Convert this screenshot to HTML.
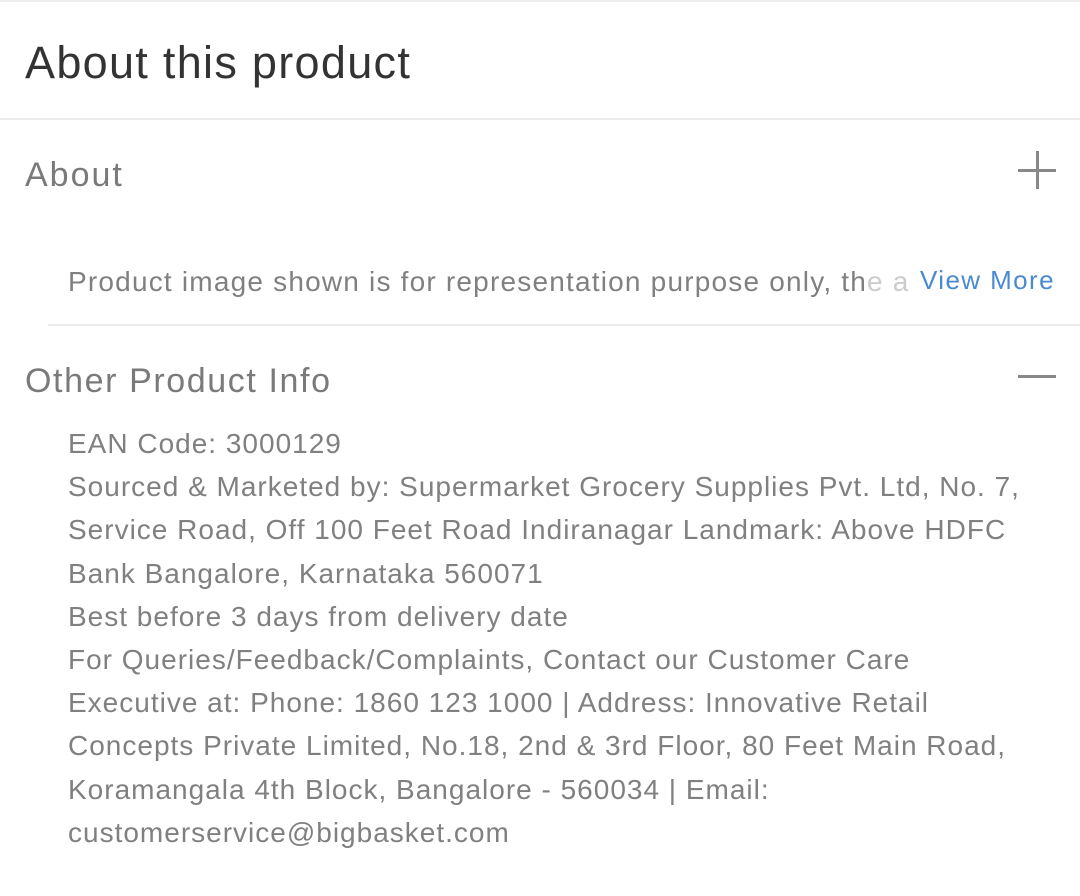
<!DOCTYPE html>
<html><head><meta charset="utf-8"><style>
body{margin:0;width:1080px;height:896px;background:#fff;font-family:"Liberation Sans",sans-serif;position:relative;overflow:hidden}
.a{position:absolute;white-space:nowrap}
.t{left:25px;top:37px;font-size:45px;color:#333;letter-spacing:1.3px}
.h{left:25px;font-size:34px;color:#7a7a7a;letter-spacing:1.6px}
.b{left:68px;font-size:28px;color:#808080;line-height:43.2px;letter-spacing:1px}
.line{position:absolute;height:2px;background:#ececec}
</style></head><body>
<div style="position:absolute;left:0;top:0;width:1080px;height:2px;background:#eee"></div>
<div class="a t">About this product</div>
<div class="line" style="left:0;top:118px;width:1080px"></div>
<div class="a h" style="top:156px;letter-spacing:2px">About</div>
<div style="position:absolute;left:1018px;top:169px;width:38px;height:3px;background:#888"></div>
<div style="position:absolute;left:1036px;top:151px;width:3px;height:38px;background:#888"></div>
<div class="a b" style="top:260px;width:846px;overflow:hidden;letter-spacing:1.2px">Product image shown is for representation purpose only, th<span style="color:#ccc">e a</span></div>
<div class="a" style="left:920px;top:265px;font-size:26px;color:#4a8ad0;letter-spacing:1.4px">View More</div>
<div class="line" style="left:48px;top:324px;width:1032px"></div>
<div class="a h" style="top:362px">Other Product Info</div>
<div style="position:absolute;left:1018px;top:375px;width:38px;height:3px;background:#888"></div>
<div class="a b" style="top:422px">EAN Code: 3000129<br>Sourced &amp; Marketed by: Supermarket Grocery Supplies Pvt. Ltd, No. 7,<br>Service Road, Off 100 Feet Road Indiranagar Landmark: Above HDFC<br>Bank Bangalore, Karnataka 560071<br>Best before 3 days from delivery date<br>For Queries/Feedback/Complaints, Contact our Customer Care<br>Executive at: Phone: 1860 123 1000 | Address: Innovative Retail<br>Concepts Private Limited, No.18, 2nd &amp; 3rd Floor, 80 Feet Main Road,<br>Koramangala 4th Block, Bangalore - 560034 | Email:<br>customerservice@bigbasket.com</div>
</body></html>
